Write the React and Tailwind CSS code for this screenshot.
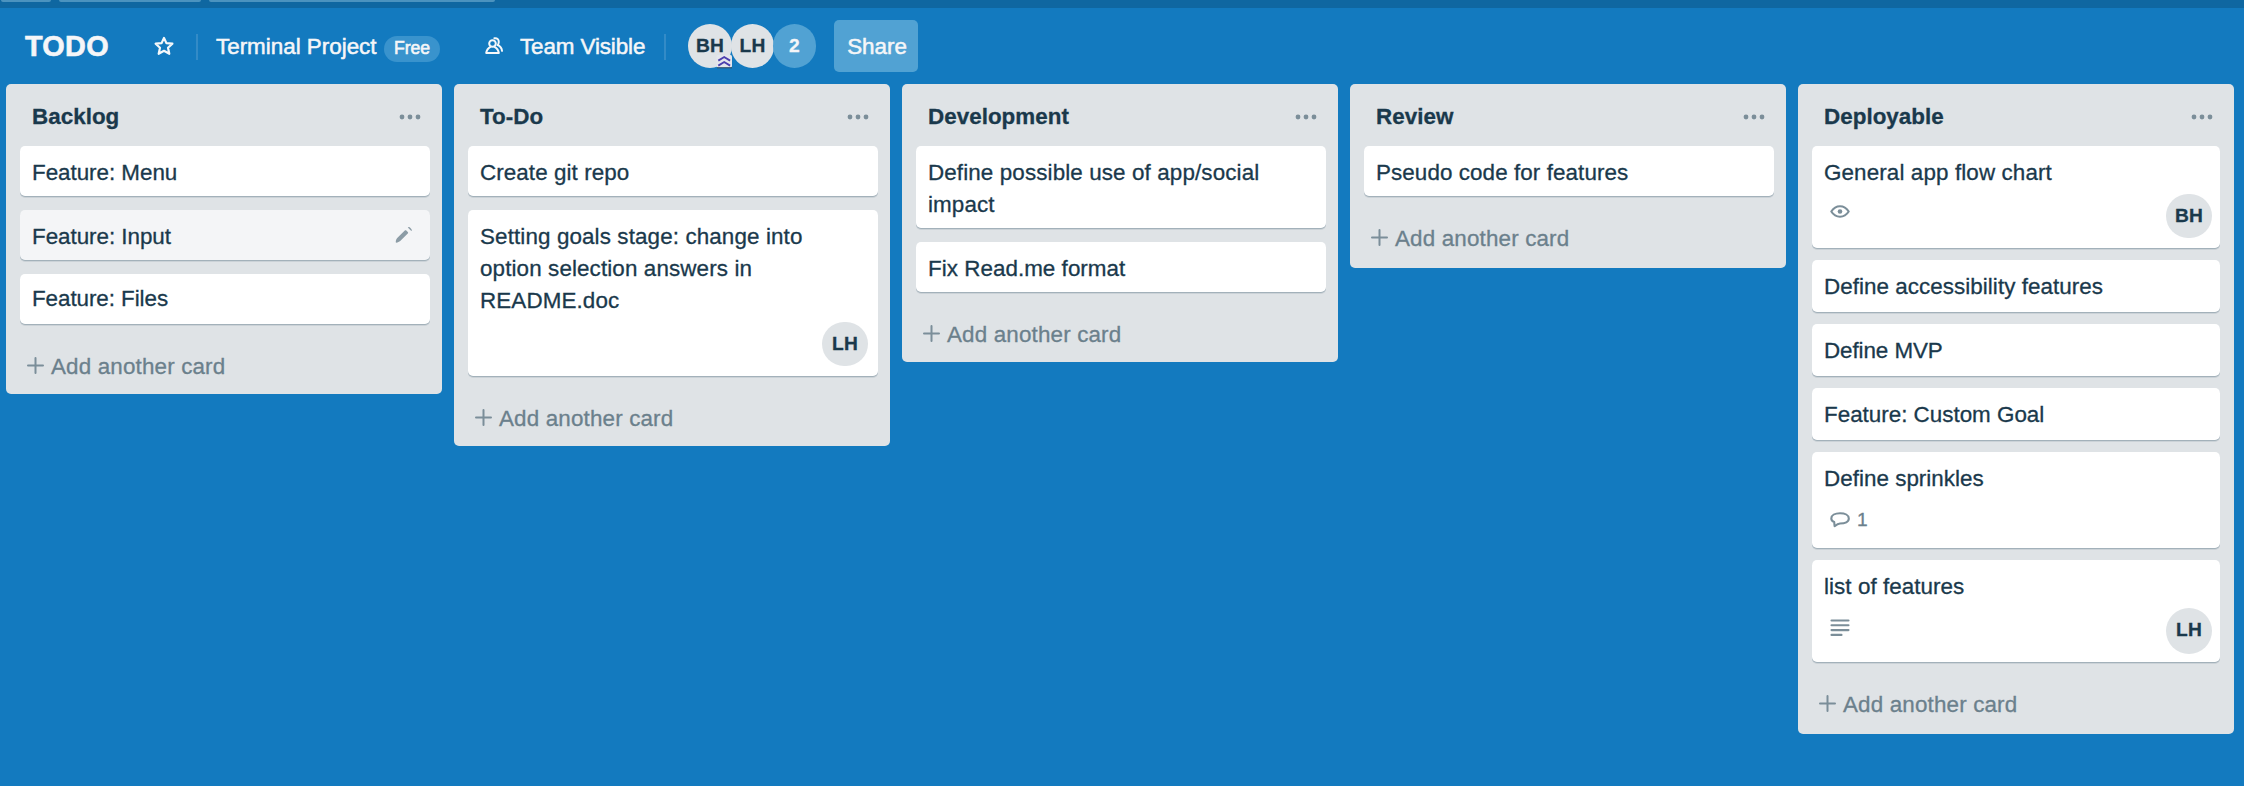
const INK = 'text-[#1a394c]';

function Avatar({ children, className = '' }) {
  return (
    <span
      className={`flex h-11 shrink-0 justify-center rounded-full bg-[#dfe3e6] text-[19.2px] font-bold leading-[43px] ${INK} ${className}`}
    >
      {children}
    </span>
  );
}

function StarIcon() {
  return (
    <svg width="20" height="20" viewBox="0 0 20 20" fill="none" stroke="#f5f8fa" strokeWidth="2.2" strokeLinejoin="round">
      <path d="M10 1.9l2.4 5.2 6 .6-4.4 4 1.3 6.1-5.3-3-5.3 3L6 11.7 1.6 7.7l6-.6z" />
    </svg>
  );
}

function PeopleIcon() {
  return (
    <svg width="19" height="18" viewBox="0 0 19 18" fill="none" stroke="#f5f8fa" strokeWidth="2" strokeLinejoin="round" strokeLinecap="round">
      <circle cx="7.5" cy="6.5" r="3.3" />
      <path d="M5.5 9.8C3 11 1.6 13 1.2 16h12.600c-.4-3-1.8-5-4.3-6.200" />
      <path d="M9.4 1.2c2.9-.4 4.7 1.5 4.3 4.3-.1 1-.4 1.9-1 2.700 2.600 1.100 4 2.800 4.300 5.600" />
    </svg>
  );
}

function ChevronsBadge() {
  return (
    <svg className="absolute left-[28px] top-[31px]" width="17" height="14" viewBox="0 0 17 14" fill="none">
      <rect x="0.5" y="0" width="15.5" height="12.5" rx="1.5" fill="#e4e6ec" />
      <path d="M1 12.8h15" stroke="#34495a" strokeWidth="1" />
      <path d="M2.300 5.600L8.200 2l5.900 3.600M2.300 10.600L8.200 7l5.900 3.600" stroke="#4b3fae" strokeWidth="1.9" />
    </svg>
  );
}

function DotsIcon() {
  return (
    <svg width="22" height="6" viewBox="0 0 22 6" fill="#7b8e99">
      <circle cx="3" cy="3" r="2.4" />
      <circle cx="11" cy="3" r="2.4" />
      <circle cx="19" cy="3" r="2.4" />
    </svg>
  );
}

function PencilIcon() {
  return (
    <svg width="18" height="18" viewBox="0 0 18 18" fill="#8c9ca6">
      <path d="M.8 16.600c-.2-1.500.4-3.400 1.400-4.500l7.600-7.600c.5-.5 1-.5 1.500 0l1.500 1.500c.5.5.5 1 0 1.500L5.200 15.100c-1 1-2.900 1.700-4.400 1.500z" />
      <path d="M12.800 1.500c.5-.6 1.100-.7 1.800-.2.8.6 1.500 1.300 2 2.100.4.7.2 1.200-.3 1.600z" />
    </svg>
  );
}

function PlusIcon() {
  return (
    <svg width="17" height="17" viewBox="0 0 17 17" stroke="#7b8e99" strokeWidth="2" strokeLinecap="round">
      <path d="M8.500 1v15M1 8.500h15" />
    </svg>
  );
}

function EyeIcon() {
  return (
    <svg width="20" height="13" viewBox="0 0 20 13" fill="none" stroke="#7b8e99">
      <path
        d="M1.300 6.500C3.400 3.200 6.500 1.300 10 1.300s6.600 1.900 8.700 5.200c-2.100 3.300-5.200 5.200-8.700 5.200S3.400 9.800 1.300 6.500z"
        strokeWidth="2.1"
        strokeLinejoin="round"
      />
      <circle cx="10" cy="6.500" r="2.300" fill="#7b8e99" stroke="none" />
    </svg>
  );
}

function CommentIcon() {
  return (
    <svg width="20" height="16" viewBox="0 0 20 16" fill="none" stroke="#7b8e99" strokeWidth="2.1" strokeLinejoin="round">
      <path d="M10 1.300c5 0 8.800 1.900 8.800 5.200s-3.800 5-8.800 5c-1.600.1-3.500 1.200-5.400 2.700L4.200 10C2.300 9.300 1.300 8 1.300 6.500 1.300 3.200 5 1.300 10 1.300z" />
    </svg>
  );
}

function DescriptionIcon() {
  return (
    <svg width="20" height="18" viewBox="0 0 20 18" stroke="#7b8e99" strokeWidth="2.1" strokeLinecap="round">
      <path d="M1.500 1.500h17M1.500 6.300h17M1.500 11.100h17M1.500 15.900h10" />
    </svg>
  );
}

const BADGES = {
  watch: (
    <span className="mt-[17px]">
      <EyeIcon />
    </span>
  ),
  comment: (
    <span className="mt-[18px] flex text-[19.2px] leading-[16px] text-[#6b808c]">
      <CommentIcon />
      <span className="ml-[7px]">1</span>
    </span>
  ),
  description: (
    <span className="mt-[17px]">
      <DescriptionIcon />
    </span>
  ),
  none: <span />,
};

const LISTS = [
  {
    title: 'Backlog',
    cards: [
      { text: 'Feature: Menu', tracking: 'tracking-[-0.03px]' },
      { text: 'Feature: Input', tracking: 'tracking-[-0.03px]', bg: 'bg-[#f4f5f7]', edit: true },
      { text: 'Feature: Files', tracking: 'tracking-[-0.06px]', top: 'pt-[9px]' },
    ],
  },
  {
    title: 'To-Do',
    cards: [
      { text: 'Create git repo', tracking: 'tracking-[0.08px]' },
      {
        text: 'Setting goals stage: change into option selection answers in README.doc',
        height: 'h-[166px]',
        badge: 'none',
        member: 'LH',
      },
    ],
  },
  {
    title: 'Development',
    cards: [
      { text: 'Define possible use of app/social impact', height: 'h-[82px]' },
      { text: 'Fix Read.me format', tracking: 'tracking-[0.04px]' },
    ],
  },
  {
    title: 'Review',
    footer: 'pb-[13px]',
    cards: [{ text: 'Pseudo code for features', tracking: 'tracking-[0.09px]' }],
  },
  {
    title: 'Deployable',
    footer: 'pb-[13px]',
    body: 'gap-3 pr-3.5',
    cards: [
      { text: 'General app flow chart', height: 'h-[102px]', badge: 'watch', member: 'BH', row: 'pr-2' },
      { text: 'Define accessibility features', tracking: 'tracking-[0.05px]', height: 'h-[52px]' },
      { text: 'Define MVP', tracking: 'tracking-[-0.08px]', height: 'h-[52px]' },
      { text: 'Feature: Custom Goal', tracking: 'tracking-[0px]', height: 'h-[52px]' },
      { text: 'Define sprinkles', tracking: 'tracking-[0.03px]', height: 'h-24', badge: 'comment' },
      {
        text: 'list of features',
        tracking: 'tracking-[0.06px]',
        height: 'h-[102px]',
        badge: 'description',
        member: 'LH',
        row: 'pr-2',
        tall: true,
      },
    ],
  },
];

function Card({
  text,
  tracking = '',
  height = 'h-[50px]',
  top = 'pt-[11px]',
  bg = 'bg-white',
  badge,
  member,
  row = 'pr-2.5',
  tall,
  edit,
}) {
  return (
    <article className={`shrink-0 rounded-[5px] shadow-[0_1px_0_#a3b1ba,0_2px_0_#cbd2d7] ${height} ${top} ${bg}`}>
      <div className="flex justify-between pl-3 pr-[17px]">
        <p className={`w-[345px] leading-8 ${INK} ${tracking}`}>{text}</p>
        {edit && (
          <span className="mt-[5px]">
            <PencilIcon />
          </span>
        )}
      </div>
      {badge && (
        <div className={`-mt-px flex items-start justify-between pl-[18px] ${row}`}>
          {BADGES[badge]}
          {member && <Avatar className={tall ? 'mt-1.5 w-[46px] min-h-[46px]' : 'mt-1.5 w-[46px]'}>{member}</Avatar>}
        </div>
      )}
    </article>
  );
}

function List({ title, cards, footer = 'pb-[11px]', body = 'gap-3.5 pr-3' }) {
  return (
    <section className="flex w-[436px] shrink-0 flex-col rounded-[5px] bg-[#dfe3e6]">
      <header className="flex h-[62px] items-start justify-between pl-[26px] pr-[21px] pt-[17px]">
        <h2 className={`font-bold leading-8 tracking-[0.03px] ${INK}`}>{title}</h2>
        <button type="button" className="mt-[13px]" aria-label="List actions">
          <DotsIcon />
        </button>
      </header>
      <div className={`flex flex-col pl-3.5 ${body}`}>
        {cards.map((card) => (
          <Card key={card.text} {...card} />
        ))}
      </div>
      <button
        type="button"
        className={`flex items-start pl-[21px] pt-[27px] text-left leading-8 tracking-[0.16px] text-[#6b808c] ${footer}`}
      >
        <span className="mr-[7px] mt-[6px]">
          <PlusIcon />
        </span>
        Add another card
      </button>
    </section>
  );
}

function Divider() {
  return <span className="mt-[26px] h-[26px] w-0.5 bg-[#338bc7]" />;
}

export default function App() {
  return (
    <div className="flex h-[786px] w-[2244px] flex-col overflow-hidden bg-[#137abf] font-['Liberation_Sans',Arial,sans-serif] text-[22.4px] tracking-[0.12px] [-webkit-text-stroke:0.3px] [&_svg]:block">
      <div className="flex h-2 shrink-0 items-start bg-[#0f67a1]">
        <span className="ml-px h-0.5 w-[50px] rounded-b-[4px] bg-[#4b93bf]" />
        <span className="ml-2 h-0.5 w-[142px] rounded-b-[4px] bg-[#4b93bf]" />
        <span className="ml-2 h-0.5 w-[286px] rounded-b-[4px] bg-[#4b93bf]" />
      </div>
      <div className="flex h-[76px] shrink-0 items-start text-[#f5f6f8]">
        <h1 className="ml-[25px] mt-[22px] w-[129px] text-[28.8px] font-bold leading-8 tracking-[0.3px] [-webkit-text-stroke:0.6px]">
          TODO
        </h1>
        <span className="mt-[28px] w-[42px]">
          <StarIcon />
        </span>
        <Divider />
        <span className="ml-[18px] mt-[23px] w-[168px] whitespace-nowrap leading-8 tracking-normal [-webkit-text-stroke:0.5px]">
          Terminal Project
        </span>
        <span className="mt-7 flex h-[26px] w-14 justify-center rounded-full bg-[#3993cd] text-[17.6px] leading-[25px] tracking-normal [-webkit-text-stroke:0.6px]">
          Free
        </span>
        <span className="ml-[45px] mt-[29px] w-[35px]">
          <PeopleIcon />
        </span>
        <span className="mt-[23px] w-[144px] whitespace-nowrap leading-8 tracking-[-0.1px] [-webkit-text-stroke:0.5px]">
          Team Visible
        </span>
        <Divider />
        <div className="ml-[22px] mt-4 flex">
          <span className="relative z-10">
            <Avatar className="w-11">BH</Avatar>
            <ChevronsBadge />
          </span>
          <Avatar className="-ml-px w-[43px]">LH</Avatar>
          <span className="-ml-px flex h-11 w-[43px] justify-center rounded-full bg-[#51a2d3] text-[19.2px] font-bold leading-[43px]">
            2
          </span>
        </div>
        <button
          type="button"
          className="ml-[18px] mt-3 flex h-[52px] w-[84px] items-start justify-center rounded-[5px] bg-[#51a2d3] pl-0.5 pt-[11px] leading-8 tracking-normal [-webkit-text-stroke:0.5px]"
        >
          Share
        </button>
      </div>
      <main className="flex items-start gap-3 pl-1.5">
        {LISTS.map((list) => (
          <List key={list.title} {...list} />
        ))}
      </main>
    </div>
  );
}
